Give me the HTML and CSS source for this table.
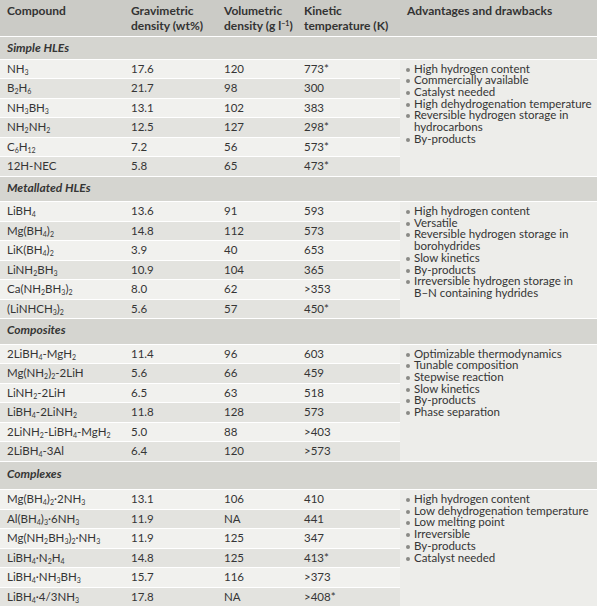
FILE: index.html
```html
<!DOCTYPE html>
<html>
<head>
<meta charset="utf-8">
<link rel="stylesheet" href="styles.css">
</head>
<body>
<table class="tbl">
  <colgroup>
    <col class="c1"><col class="c2"><col class="c3"><col class="c4"><col class="c5">
  </colgroup>
  <thead>
    <tr class="head">
      <th>Compound</th>
      <th>Gravimetric<br>density (wt%)</th>
      <th>Volumetric<br>density (g l<sup>−1</sup>)</th>
      <th>Kinetic<br>temperature (K)</th>
      <th>Advantages and drawbacks</th>
    </tr>
  </thead>
  <tbody>
    <tr class="sec sec-first"><td colspan="5">Simple HLEs</td></tr>
    <tr class="r odd"><td>NH<sub>3</sub></td><td>17.6</td><td>120</td><td>773*</td>
      <td class="adv" rowspan="6"><ul>
        <li>High hydrogen content</li>
        <li>Commercially available</li>
        <li>Catalyst needed</li>
        <li>High dehydrogenation temperature</li>
        <li>Reversible hydrogen storage in hydrocarbons</li>
        <li>By-products</li>
      </ul></td></tr>
    <tr class="r even"><td>B<sub>2</sub>H<sub>6</sub></td><td>21.7</td><td>98</td><td>300</td></tr>
    <tr class="r odd"><td>NH<sub>3</sub>BH<sub>3</sub></td><td>13.1</td><td>102</td><td>383</td></tr>
    <tr class="r even"><td>NH<sub>2</sub>NH<sub>2</sub></td><td>12.5</td><td>127</td><td>298*</td></tr>
    <tr class="r odd"><td>C<sub>6</sub>H<sub>12</sub></td><td>7.2</td><td>56</td><td>573*</td></tr>
    <tr class="r even"><td>12H-NEC</td><td>5.8</td><td>65</td><td>473*</td></tr>

    <tr class="sec"><td colspan="5">Metallated HLEs</td></tr>
    <tr class="r odd"><td>LiBH<sub>4</sub></td><td>13.6</td><td>91</td><td>593</td>
      <td class="adv" rowspan="6"><ul>
        <li>High hydrogen content</li>
        <li>Versatile</li>
        <li>Reversible hydrogen storage in borohydrides</li>
        <li>Slow kinetics</li>
        <li>By-products</li>
        <li>Irreversible hydrogen storage in <span class="nw">B–N</span> containing hydrides</li>
      </ul></td></tr>
    <tr class="r even"><td>Mg(BH<sub>4</sub>)<sub>2</sub></td><td>14.8</td><td>112</td><td>573</td></tr>
    <tr class="r odd"><td>LiK(BH<sub>4</sub>)<sub>2</sub></td><td>3.9</td><td>40</td><td>653</td></tr>
    <tr class="r even"><td>LiNH<sub>2</sub>BH<sub>3</sub></td><td>10.9</td><td>104</td><td>365</td></tr>
    <tr class="r odd"><td>Ca(NH<sub>2</sub>BH<sub>3</sub>)<sub>2</sub></td><td>8.0</td><td>62</td><td>&gt;353</td></tr>
    <tr class="r even"><td>(LiNHCH<sub>3</sub>)<sub>2</sub></td><td>5.6</td><td>57</td><td>450*</td></tr>

    <tr class="sec"><td colspan="5">Composites</td></tr>
    <tr class="r odd"><td>2LiBH<sub>4</sub>-MgH<sub>2</sub></td><td>11.4</td><td>96</td><td>603</td>
      <td class="adv" rowspan="6"><ul>
        <li>Optimizable thermodynamics</li>
        <li>Tunable composition</li>
        <li>Stepwise reaction</li>
        <li>Slow kinetics</li>
        <li>By-products</li>
        <li>Phase separation</li>
      </ul></td></tr>
    <tr class="r even"><td>Mg(NH<sub>2</sub>)<sub>2</sub>-2LiH</td><td>5.6</td><td>66</td><td>459</td></tr>
    <tr class="r odd"><td>LiNH<sub>2</sub>-2LiH</td><td>6.5</td><td>63</td><td>518</td></tr>
    <tr class="r even"><td>LiBH<sub>4</sub>-2LiNH<sub>2</sub></td><td>11.8</td><td>128</td><td>573</td></tr>
    <tr class="r odd"><td>2LiNH<sub>2</sub>-LiBH<sub>4</sub>-MgH<sub>2</sub></td><td>5.0</td><td>88</td><td>&gt;403</td></tr>
    <tr class="r even"><td>2LiBH<sub>4</sub>-3Al</td><td>6.4</td><td>120</td><td>&gt;573</td></tr>

    <tr class="sec sec-last"><td colspan="5">Complexes</td></tr>
    <tr class="r odd"><td>Mg(BH<sub>4</sub>)<sub>2</sub>·2NH<sub>3</sub></td><td>13.1</td><td>106</td><td>410</td>
      <td class="adv" rowspan="6"><ul>
        <li>High hydrogen content</li>
        <li>Low dehydrogenation temperature</li>
        <li>Low melting point</li>
        <li>Irreversible</li>
        <li>By-products</li>
        <li>Catalyst needed</li>
      </ul></td></tr>
    <tr class="r even"><td>Al(BH<sub>4</sub>)<sub>3</sub>·6NH<sub>3</sub></td><td>11.9</td><td>NA</td><td>441</td></tr>
    <tr class="r odd"><td>Mg(NH<sub>2</sub>BH<sub>3</sub>)<sub>2</sub>·NH<sub>3</sub></td><td>11.9</td><td>125</td><td>347</td></tr>
    <tr class="r even"><td>LiBH<sub>4</sub>·N<sub>2</sub>H<sub>4</sub></td><td>14.8</td><td>125</td><td>413*</td></tr>
    <tr class="r odd"><td>LiBH<sub>4</sub>·NH<sub>3</sub>BH<sub>3</sub></td><td>15.7</td><td>116</td><td>&gt;373</td></tr>
    <tr class="r even"><td>LiBH<sub>4</sub>·4/3NH<sub>3</sub></td><td>17.8</td><td>NA</td><td>&gt;408*</td></tr>
  </tbody>
</table>
</body>
</html>
```
FILE: styles.css
```css
html, body {
  margin: 0;
  padding: 0;
  background: #ffffff;
}
body {
  font-family: Lato, "Open Sans", sans-serif;
  color: #353535;
  font-size: 11.5px;
}
.tbl {
  width: 597px;
  border-collapse: collapse;
  table-layout: fixed;
}
.c1 { width: 124px; }
.c2 { width: 93px; }
.c3 { width: 80px; }
.c4 { width: 103px; }
.c5 { width: 197px; }
.tbl th, .tbl td {
  padding: 0 0 0 7px;
  text-align: left;
  vertical-align: middle;
  border-bottom: 1px solid #ffffff;
}
.head th {
  background: #cbcbc6;
  font-weight: bold;
  font-size: 12px;
  line-height: 14.5px;
  height: 36.5px;
  vertical-align: top;
  padding-top: 4px;
  box-sizing: border-box;
  color: #333;
}
.head sup {
  font-size: 7px;
  vertical-align: 4px;
  line-height: 0;
}
.sec td {
  background: #d5d5d0;
  font-style: italic;
  font-weight: bold;
  height: 25.5px;
  box-sizing: border-box;
  padding-bottom: 3px;
  font-size: 12px;
}
.sec-first td {
  height: 22.5px;
  padding-bottom: 1px;
}
.sec-last td {
  height: 28.5px;
  padding-bottom: 4px;
}
.r td {
  height: 18.5px;
  line-height: 14px;
}
.odd td { background: #f1f1ee; }
.even td { background: #e3e3df; }
.r td.adv {
  background: #ededea;
  vertical-align: top;
  padding: 3px 4px 0 6px;
  line-height: 11.7px;
}
.nw { white-space: nowrap; }
sub {
  font-size: 7px;
  vertical-align: -2px;
  line-height: 0;
}
.adv ul {
  list-style: none;
  margin: 0;
  padding: 0;
}
.adv li {
  position: relative;
  padding-left: 8px;
}
.adv li::before {
  content: "";
  position: absolute;
  left: 0;
  top: 5px;
  width: 4px;
  height: 4px;
  border-radius: 50%;
  background: #8a8a86;
}
```
